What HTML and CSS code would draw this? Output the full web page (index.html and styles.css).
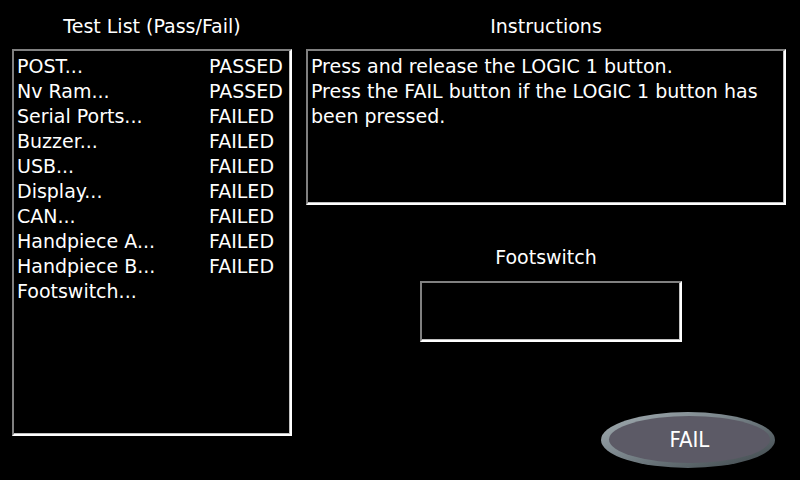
FILE: index.html
```html
<!DOCTYPE html>
<html lang="en">
<head>
    <meta charset="UTF-8">
    <title>Test List</title>
    <link rel="stylesheet" href="styles.css">
</head>
<body>
    <div class="screen">
        <div class="left-col">
            <div class="title">Test List (Pass/Fail)</div>
            <div class="sunken test-list">
                <div class="row"><span class="name">POST...</span><span class="status">PASSED</span></div>
                <div class="row"><span class="name">Nv Ram...</span><span class="status">PASSED</span></div>
                <div class="row"><span class="name">Serial Ports...</span><span class="status">FAILED</span></div>
                <div class="row"><span class="name">Buzzer...</span><span class="status">FAILED</span></div>
                <div class="row"><span class="name">USB...</span><span class="status">FAILED</span></div>
                <div class="row"><span class="name">Display...</span><span class="status">FAILED</span></div>
                <div class="row"><span class="name">CAN...</span><span class="status">FAILED</span></div>
                <div class="row"><span class="name">Handpiece A...</span><span class="status">FAILED</span></div>
                <div class="row"><span class="name">Handpiece B...</span><span class="status">FAILED</span></div>
                <div class="row"><span class="name">Footswitch...</span><span class="status"></span></div>
            </div>
        </div>

        <div class="right-col">
            <div class="title">Instructions</div>
            <div class="sunken instructions">
                Press and release the LOGIC 1 button.<br>
                Press the FAIL button if the LOGIC 1 button has been pressed.
            </div>

            <div class="title sub-title">Footswitch</div>
            <div class="sunken footswitch"></div>

            <div class="button-row">
                <button class="fail-btn"><span class="fail-face">FAIL</span></button>
            </div>
        </div>
    </div>
</body>
</html>
```

FILE: styles.css
```css
body {
    margin: 0;
    padding: 0;
    background-color: #000;
    color: #fff;
    font-family: 'DejaVu Sans', sans-serif;
    font-size: 19px;
    -webkit-font-smoothing: none;
}

.screen {
    width: 800px;
    height: 480px;
    display: flex;
    gap: 14px;
    padding-left: 12px;
    box-sizing: border-box;
}

.title {
    height: 25px;
    line-height: 25px;
    margin-top: 14px;
    margin-bottom: 10px;
    text-align: center;
}

.sunken {
    border: 2px solid;
    border-color: #808080 #fff #fff #808080;
    box-shadow: inset -1px -1px 0 #c0c0c0;
    box-sizing: border-box;
}

.left-col {
    width: 280px;
}

.test-list {
    height: 387px;
    padding: 3px 3px;
}

.row {
    display: flex;
    height: 25px;
    line-height: 25px;
}

.name {
    width: 192px;
}

.right-col {
    width: 480px;
    display: flex;
    flex-direction: column;
}

.instructions {
    height: 156px;
    padding: 3px 3px;
    line-height: 25px;
}

.sub-title {
    margin-top: 40px;
    margin-bottom: 11px;
}

.footswitch {
    width: 262px;
    height: 61px;
    margin-left: 114px;
}

.button-row {
    display: flex;
    justify-content: flex-end;
    margin-top: 70px;
    padding-right: 11px;
}

.fail-btn {
    width: 174px;
    height: 56px;
    padding: 0;
    border: none;
    border-radius: 50%;
    background: linear-gradient(160deg, #a4aeb3 0%, #7c878d 40%, #3c4549 100%);
    display: flex;
    cursor: pointer;
}

.fail-face {
    flex: 1;
    margin: 4px 5px 5px 8px;
    border-radius: 50%;
    background-color: #5c5a66;
    color: #fff;
    font-family: 'DejaVu Sans Condensed', 'DejaVu Sans', sans-serif;
    font-size: 22px;
    display: flex;
    align-items: center;
    justify-content: center;
}
```
